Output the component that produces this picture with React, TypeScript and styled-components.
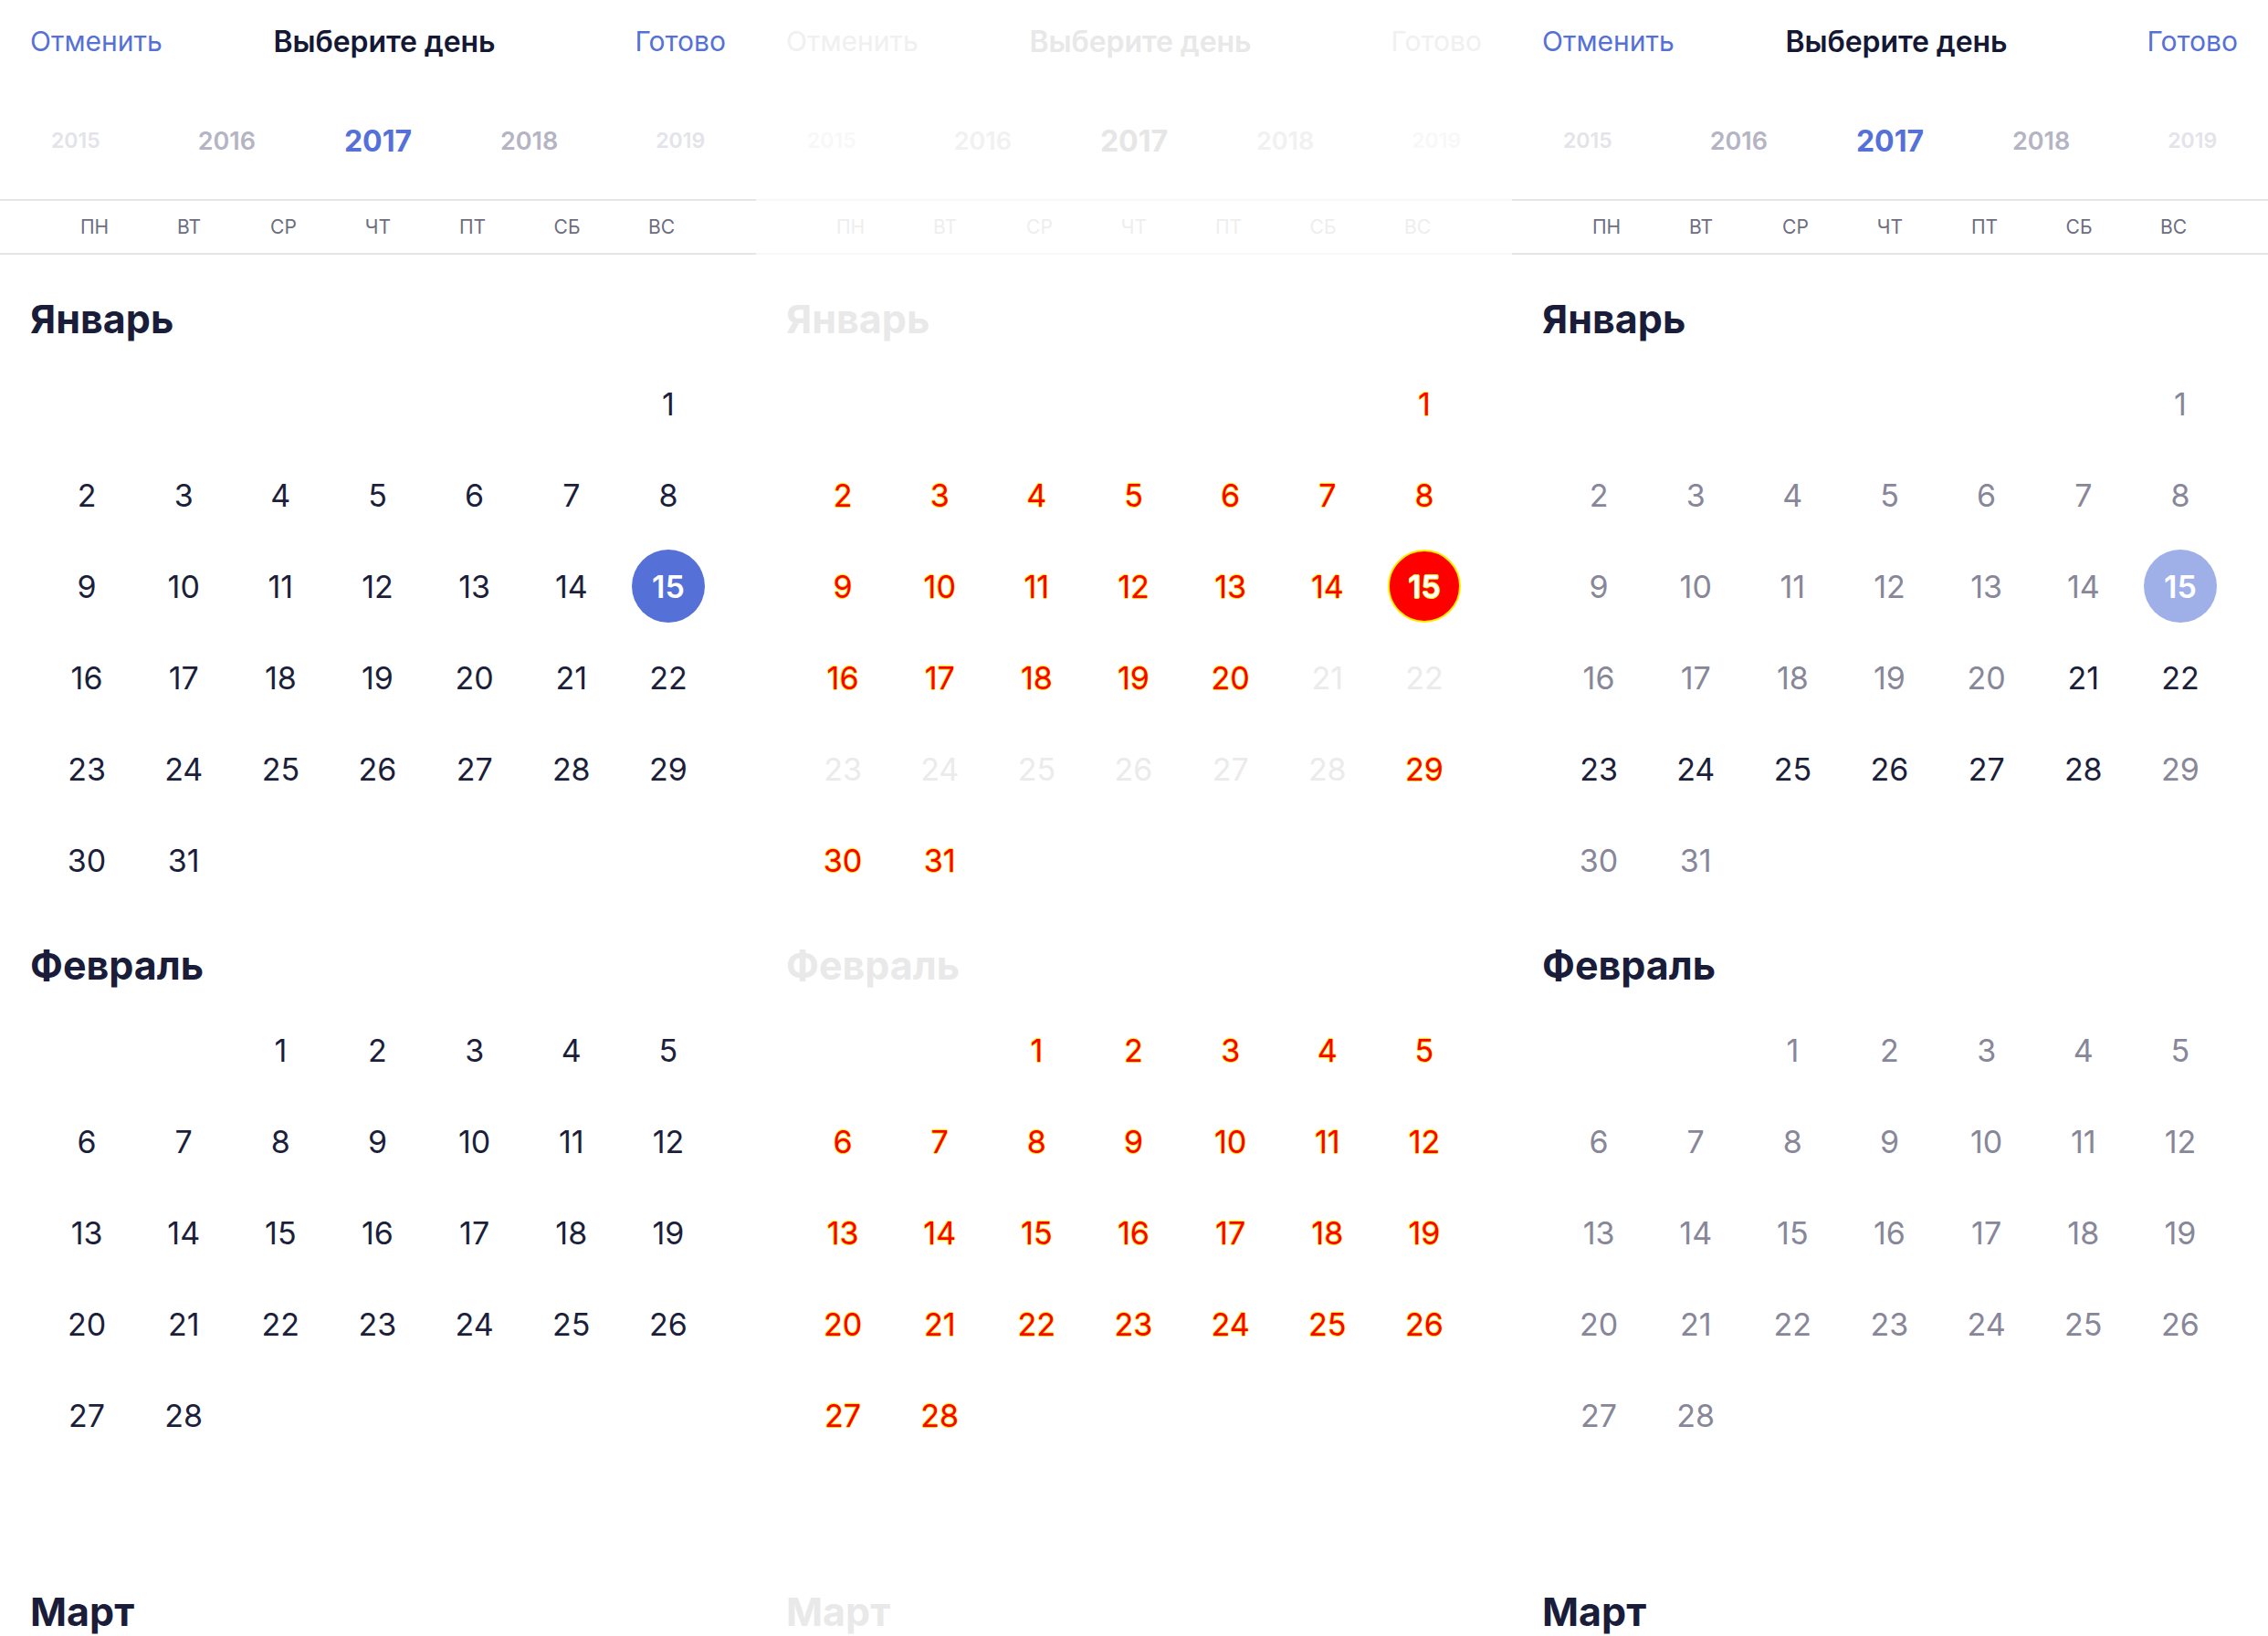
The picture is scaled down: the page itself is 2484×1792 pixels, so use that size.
import { FC } from "react";
import styled, { createGlobalStyle, css } from "styled-components";

type Variant = "base" | "diff" | "range";
type Tone = "dark" | "muted" | "hot" | "ghost";

interface MonthData {
  name: string;
  offset: number;
  days: number;
  // only the heading fits on screen
  headingOnly?: boolean;
}

const months: MonthData[] = [
  { name: "Январь", offset: 6, days: 31 },
  { name: "Февраль", offset: 2, days: 28 },
  { name: "Март", offset: 2, days: 31, headingOnly: true },
];

const years = [
  { label: "2015", level: 2 },
  { label: "2016", level: 1 },
  { label: "2017", level: 0 },
  { label: "2018", level: 1 },
  { label: "2019", level: 2 },
];

const weekDays = ["пн", "вт", "ср", "чт", "пт", "сб", "вс"];

const blue = "#5571d7";
const ink = "#1c1f3b";
const yellowEdge =
  "0.6px 0 0 #ffee00, -0.6px 0 0 #ffee00, 0 0.6px 0 #ffee00, 0 -0.6px 0 #ffee00";

const GlobalStyle = createGlobalStyle`
  html, body {
    margin: 0;
    padding: 0;
    background: #ffffff;
    overflow: hidden;
  }
  body {
    font-family: Inter, "Noto Sans", sans-serif;
    -webkit-font-smoothing: antialiased;
  }
`;

const Page = styled.div`
  display: grid;
  grid-template-columns: repeat(3, 828px);
  width: 2484px;
  height: 1792px;
  overflow: hidden;
  background: #fff;
`;

const Panel = styled.section`
  display: flex;
  flex-direction: column;
  overflow: hidden;
  & > * {
    flex-shrink: 0;
  }
`;

const Header = styled.header`
  display: grid;
  grid-template-columns: 1fr auto 1fr;
  align-items: center;
  height: 90px;
  padding: 0 33px;
`;

const HeaderButton = styled.span<{ $faded: boolean; $end?: boolean }>`
  font-size: 30px;
  color: ${(p) => (p.$faded ? "#f0f0f0" : blue)};
  justify-self: ${(p) => (p.$end ? "end" : "start")};
`;

const Title = styled.h1<{ $faded: boolean }>`
  margin: 0;
  font-size: 32px;
  font-weight: 600;
  letter-spacing: -0.1px;
  color: ${(p) => (p.$faded ? "#e8e8e8" : "#151834")};
  padding-left: 14px;
`;

const YearRow = styled.div`
  display: grid;
  grid-template-columns: repeat(5, 1fr);
  align-items: center;
  height: 128px;
`;

const yearLook = [
  { size: 32, weight: 700, color: blue, faded: "#e6e6e6" },
  { size: 27, weight: 600, color: "#b4b4c3", faded: "#f1f1f1" },
  { size: 23, weight: 600, color: "#e3e3e9", faded: "#f8f8f8" },
];

const Year = styled.span<{ $level: number; $faded: boolean }>`
  text-align: center;
  font-size: ${(p) => yearLook[p.$level].size}px;
  font-weight: ${(p) => yearLook[p.$level].weight};
  color: ${(p) =>
    p.$faded ? yearLook[p.$level].faded : yearLook[p.$level].color};
`;

const Divider = styled.hr<{ $faded: boolean }>`
  margin: 0;
  border: 0;
  height: 2px;
  background: ${(p) => (p.$faded ? "#f8f8f8" : "#e4e4e9")};
`;

const WeekRow = styled.div`
  display: grid;
  grid-template-columns: repeat(7, 1fr);
  align-items: center;
  height: 57px;
  padding: 0 51.75px;
`;

const WeekDay = styled.span<{ $faded: boolean }>`
  text-align: center;
  font-size: 21px;
  text-transform: uppercase;
  color: ${(p) => (p.$faded ? "#eeeeee" : "#6d6d7e")};
`;

const Months = styled.div`
  padding-top: 27px;
`;

const Month = styled.div`
  margin-bottom: 22px;
`;

const MonthTitle = styled.h2<{ $faded: boolean }>`
  margin: 0;
  height: 86px;
  line-height: 86px;
  padding-left: 33px;
  font-size: 43px;
  font-weight: 700;
  color: ${(p) => (p.$faded ? "#e9e9e9" : "#1a1d3a")};
`;

const DayGrid = styled.div`
  display: grid;
  grid-template-columns: repeat(7, 1fr);
  grid-auto-rows: 100px;
  padding: 0 43px 0 42px;
`;

const toneColor: Record<Tone, string> = {
  dark: ink,
  muted: "#878799",
  hot: "#ff0000",
  ghost: "#ebebeb",
};

const DayCell = styled.div`
  display: flex;
  align-items: center;
  justify-content: center;
`;

const DayNumber = styled.span<{ $tone: Tone }>`
  font-size: 34px;
  color: ${(p) => toneColor[p.$tone]};
  ${(p) =>
    p.$tone === "hot" &&
    css`
      text-shadow: ${yellowEdge};
    `}
`;

const circleColor: Record<Variant, string> = {
  base: blue,
  range: "#9eb0e7",
  diff: "#ff0000",
};

const Selected = styled.span<{ $variant: Variant }>`
  display: flex;
  align-items: center;
  justify-content: center;
  width: 80px;
  height: 80px;
  border-radius: 50%;
  box-sizing: border-box;
  font-size: 34px;
  font-weight: 600;
  color: #ffffff;
  background: ${(p) => circleColor[p.$variant]};
  ${(p) =>
    p.$variant === "diff" &&
    css`
      border: 2px solid #ffee00;
      text-shadow: ${yellowEdge};
    `}
`;

const toneFor = (variant: Variant, monthIdx: number, day: number): Tone => {
  const inRange = monthIdx === 0 && day >= 21 && day <= 28;
  if (variant === "base") return "dark";
  if (variant === "range") return inRange ? "dark" : "muted";
  return inRange ? "ghost" : "hot";
};

const MonthBlock: FC<{ month: MonthData; index: number; variant: Variant }> = ({
  month,
  index,
  variant,
}) => {
  const faded = variant === "diff";
  const cells: (number | null)[] = [];
  for (let i = 0; i < month.offset; i++) cells.push(null);
  for (let d = 1; d <= month.days; d++) cells.push(d);
  while (cells.length < 42) cells.push(null);

  return (
    <Month>
      <MonthTitle $faded={faded}>{month.name}</MonthTitle>
      {!month.headingOnly && (
        <DayGrid>
          {cells.map((d, i) => (
            <DayCell key={i}>
              {d === null ? null : index === 0 && d === 15 ? (
                <Selected $variant={variant}>{d}</Selected>
              ) : (
                <DayNumber $tone={toneFor(variant, index, d)}>{d}</DayNumber>
              )}
            </DayCell>
          ))}
        </DayGrid>
      )}
    </Month>
  );
};

const DayPicker: FC<{ variant: Variant }> = ({ variant }) => {
  const faded = variant === "diff";
  return (
    <Panel>
      <Header>
        <HeaderButton $faded={faded}>Отменить</HeaderButton>
        <Title $faded={faded}>Выберите день</Title>
        <HeaderButton $faded={faded} $end>
          Готово
        </HeaderButton>
      </Header>
      <YearRow>
        {years.map((y) => (
          <Year key={y.label} $level={y.level} $faded={faded}>
            {y.label}
          </Year>
        ))}
      </YearRow>
      <Divider $faded={faded} />
      <WeekRow>
        {weekDays.map((w) => (
          <WeekDay key={w} $faded={faded}>
            {w}
          </WeekDay>
        ))}
      </WeekRow>
      <Divider $faded={faded} />
      <Months>
        {months.map((m, i) => (
          <MonthBlock key={m.name} month={m} index={i} variant={variant} />
        ))}
      </Months>
    </Panel>
  );
};

const App: FC = () => (
  <>
    <GlobalStyle />
    <Page>
      <DayPicker variant="base" />
      <DayPicker variant="diff" />
      <DayPicker variant="range" />
    </Page>
  </>
);

export default App;
